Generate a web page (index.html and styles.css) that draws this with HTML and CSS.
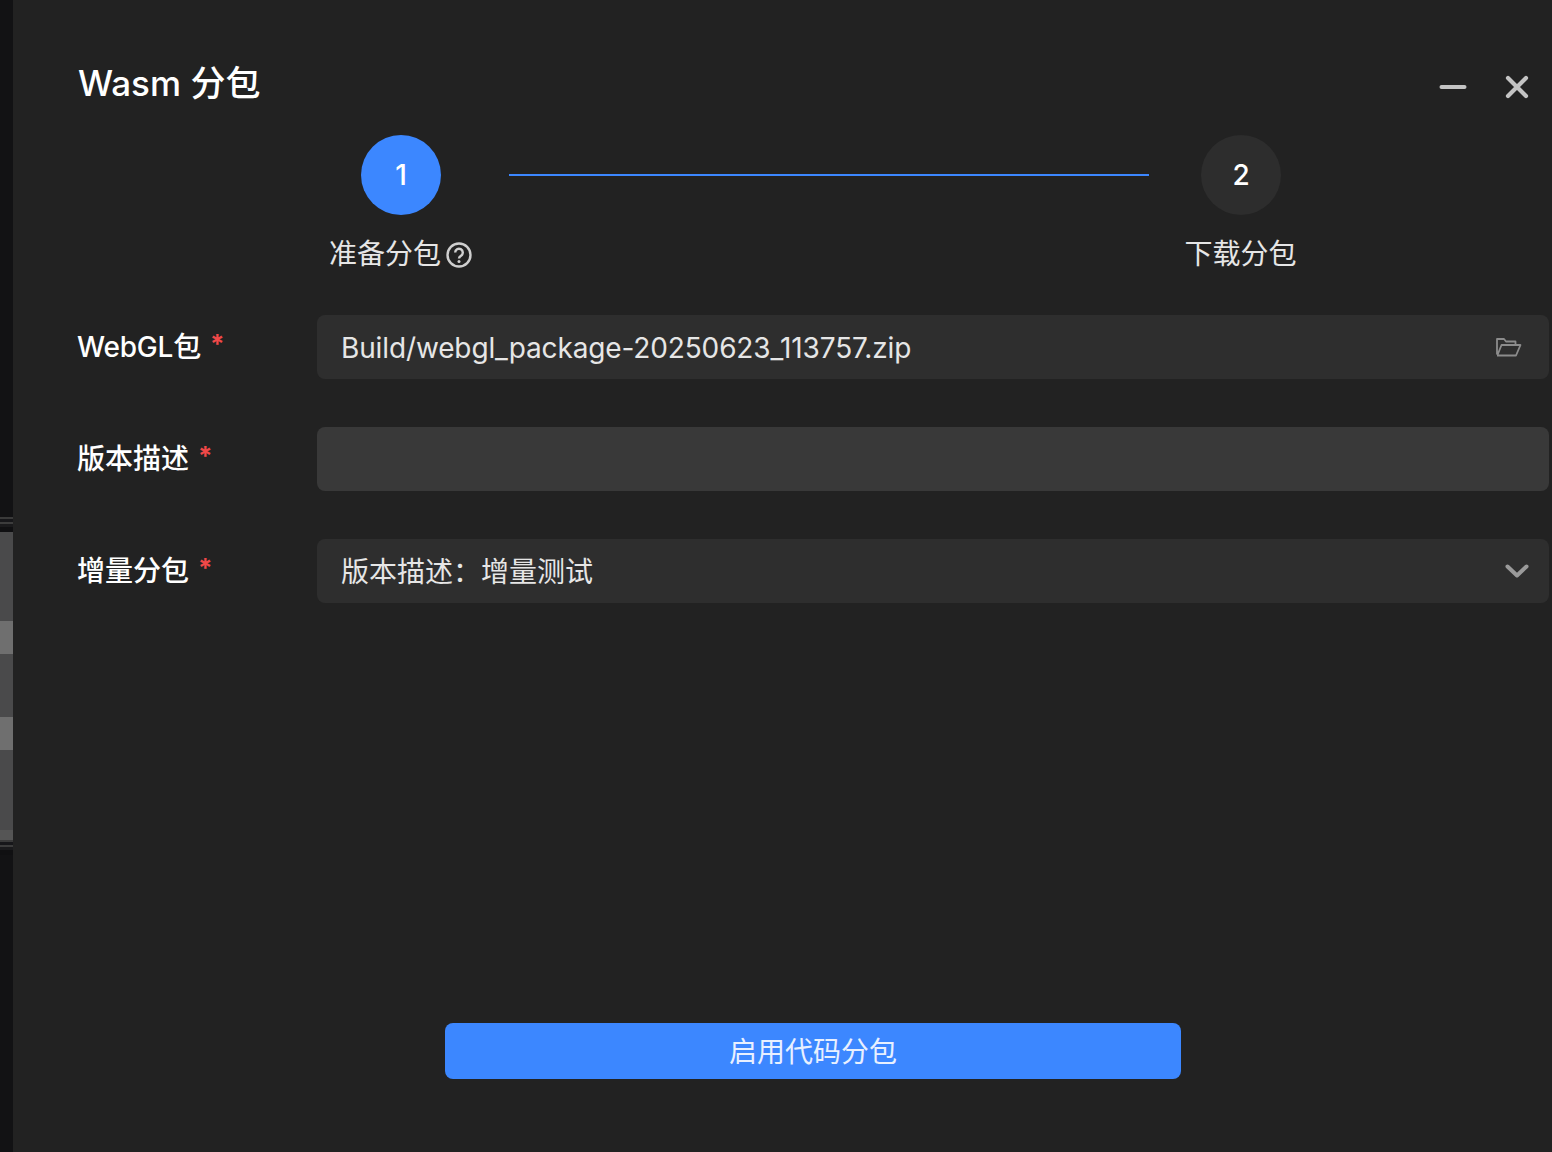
FILE: index.html
```html
<!DOCTYPE html>
<html lang="zh-CN">
<head>
<meta charset="utf-8">
<title>Wasm 分包</title>
<link rel="stylesheet" href="styles.css">
</head>
<body>
<div class="app">
  <div class="backdrop">
    <div class="bd bd-dark bd-top"></div>
    <div class="bd bd-seams"></div>
    <div class="bd bd-mid bd-a"></div>
    <div class="bd bd-light"></div>
    <div class="bd bd-mid bd-b"></div>
    <div class="bd bd-light"></div>
    <div class="bd bd-mid bd-c"></div>
    <div class="bd bd-foot"></div>
    <div class="bd bd-seams"></div>
    <div class="bd bd-dark bd-bottom"></div>
  </div>
  <main class="dialog">
    <header class="header">
      <h1 class="title">Wasm 分包</h1>
      <div class="win-actions">
        <svg class="win-icon" viewBox="0 0 28 28" width="28" height="28"><path d="M2.500 14h23" stroke="#c4c4c4" stroke-width="4" stroke-linecap="round" fill="none"/></svg>
        <svg class="win-icon" viewBox="0 0 28 28" width="28" height="28"><path d="M5 5l18 18M23 5L5 23" stroke="#c4c4c4" stroke-width="4.200" stroke-linecap="round" fill="none"/></svg>
      </div>
    </header>
    <section class="steps">
      <div class="step">
        <div class="circle circle-active">1</div>
        <div class="step-label"><span class="step-text">准备分包</span><svg class="help" viewBox="0 0 26 26" width="26" height="26"><circle cx="13" cy="13" r="11.500" fill="none" stroke="#cfcfcf" stroke-width="2.400"/><path d="M9.200 10.600a3.800 3.800 0 1 1 5.900 3.100c-1.300.9-2.100 1.400-2.100 2.900" fill="none" stroke="#cfcfcf" stroke-width="2.400"/><circle cx="13" cy="19.500" r="1.500" fill="#cfcfcf"/></svg></div>
      </div>
      <div class="step-line"></div>
      <div class="step step-last">
        <div class="circle">2</div>
        <div class="step-label"><span class="step-text">下载分包</span></div>
      </div>
    </section>
    <form class="form">
      <div class="row">
        <div class="label"><span class="label-latin">WebGL包</span><span class="req">*</span></div>
        <div class="field">
          <span class="value value-latin">Build/webgl_package-20250623_113757.zip</span>
          <svg class="field-icon" viewBox="0 0 26 20" width="26" height="20"><path d="M1 17.500V2h7l2 2.500h9.500V8M1 18.500h19L24.500 8H5.500L1.500 18" fill="none" stroke="#8c8c8c" stroke-width="1.800" stroke-linejoin="round"/></svg>
        </div>
      </div>
      <div class="row">
        <div class="label">版本描述<span class="req">*</span></div>
        <div class="field field-focus"></div>
      </div>
      <div class="row">
        <div class="label">增量分包<span class="req">*</span></div>
        <div class="field">
          <span class="value value-cjk">版本描述：增量测试</span>
          <svg class="field-chevron" viewBox="0 0 24 14" width="24" height="14"><path d="M2.500 2.500L12 11.500l9.500-9" fill="none" stroke="#9a9a9a" stroke-width="4" stroke-linecap="round" stroke-linejoin="round"/></svg>
        </div>
      </div>
    </form>
    <div class="footer">
      <button type="button" class="primary">启用代码分包</button>
    </div>
  </main>
</div>
</body>
</html>
```
FILE: styles.css
```css
* { box-sizing: border-box; }
html, body { margin: 0; height: 100%; }
body {
  background: #222;
  color: #fff;
  font-family: Inter, "Noto Sans CJK SC", sans-serif;
  overflow: hidden;
}
.app { display: flex; width: 1552px; height: 1152px; }

.backdrop { width: 13px; flex: none; display: flex; flex-direction: column; background: #121214; }
.bd { flex: none; }
.bd-top { height: 517px; }
.bd-seams { height: 15px; background: linear-gradient(#3a3a3a 0 2px, #17171a 2px 5px, #3c3c3c 5px 7px, #1a1a1c 7px 10px, #101012 10px 15px); }
.bd-mid { background: #4a4a4b; }
.bd-a { height: 89px; }
.bd-b { height: 63px; }
.bd-c { height: 80px; }
.bd-light { height: 33px; background: #6f6f6f; }
.bd-foot { height: 10px; background: #555; }
.bd-bottom { flex: 1; }

.dialog { flex: 1; min-width: 0; display: flex; flex-direction: column; padding: 0 3px 73px 64px; background: #222; }

.header { height: 135px; flex: none; display: flex; justify-content: space-between; align-items: flex-start; }
.title { margin: 60px 0 0 1px; font-size: 35px; line-height: 46px; font-weight: 500; }
.win-actions { display: flex; gap: 36px; margin-top: 73px; margin-right: 18px; }
.win-icon { display: block; }

.steps { display: flex; align-items: flex-start; gap: 37px; margin-left: 253px; flex: none; }
.step { display: flex; flex-direction: column; align-items: center; }
.step-last { margin-left: 0; width: 110px; }
.circle {
  width: 80px; height: 80px; border-radius: 50%; flex: none;
  background: #2d2d2d; color: #fff;
  display: flex; align-items: center; justify-content: center;
  font-size: 28px; font-weight: 500;
}
.circle-active { background: #3c87ff; }
.step-label { display: flex; align-items: center; gap: 5px; margin-top: 20px; height: 40px; font-size: 28px; color: #e6e6e6; }
.step-text { line-height: 38px; height: 38px; margin-top: -2px; margin-left: -1px; white-space: nowrap; }
.help { display: block; }
.step-line { width: 640px; height: 2px; margin-top: 39px; background: #3c87ff; flex: none; }

.form { display: flex; flex-direction: column; gap: 48px; margin-top: 40px; flex: none; }
.row { display: flex; align-items: center; }
.label { width: 240px; flex: none; display: flex; font-size: 28px; font-weight: 500; line-height: 64px; height: 64px; color: #fff; }
.label-latin { letter-spacing: -0.2px; }
.req { color: #f04848; font-size: 26px; line-height: 58px; margin-left: 9px; font-weight: 700; }
.field {
  flex: 1; height: 64px; border-radius: 8px; background: #2e2e2e;
  display: flex; align-items: center; justify-content: space-between;
  padding: 0 20px 0 24px; font-size: 28px; color: #e6e6e6;
}
.field-focus { background: #393939; }
.value-latin { letter-spacing: -0.13px; margin-top: 1px; }
.value-cjk { margin-top: -2px; }
.field-icon { display: block; margin-right: 7px; }
.field-chevron { display: block; }

.footer { margin-top: auto; display: flex; justify-content: center; }
.primary {
  width: 736px; height: 56px; border: 0; border-radius: 8px; padding: 0 0 2px;
  background: #3c87ff; color: #e8f0ff;
  font: inherit; font-size: 28px;
}
```
